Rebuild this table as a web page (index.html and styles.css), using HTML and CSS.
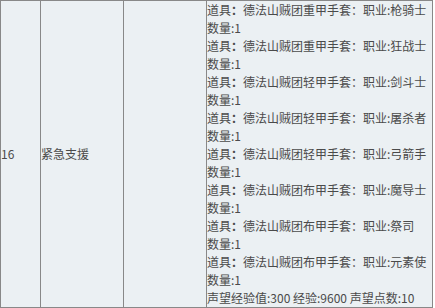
FILE: index.html
```html
<!DOCTYPE html>
<html>
<head>
<meta charset="utf-8">
<link rel="stylesheet" href="styles.css">
</head>
<body>
<table class="quest">
  <colgroup>
    <col class="c-id"><col class="c-name"><col class="c-blank"><col class="c-reward">
  </colgroup>
  <tr>
    <td class="cell">16</td>
    <td class="cell">紧急支援</td>
    <td class="cell"></td>
    <td class="cell reward">
      <div class="line">道具<b class="colon">：</b>德法山贼团重甲手套：职业:枪骑士</div>
      <div class="line">数量:1</div>
      <div class="line">道具<b class="colon">：</b>德法山贼团重甲手套：职业:狂战士</div>
      <div class="line">数量:1</div>
      <div class="line">道具<b class="colon">：</b>德法山贼团轻甲手套：职业:剑斗士</div>
      <div class="line">数量:1</div>
      <div class="line">道具<b class="colon">：</b>德法山贼团轻甲手套：职业:屠杀者</div>
      <div class="line">数量:1</div>
      <div class="line">道具<b class="colon">：</b>德法山贼团轻甲手套：职业:弓箭手</div>
      <div class="line">数量:1</div>
      <div class="line">道具<b class="colon">：</b>德法山贼团布甲手套：职业:魔导士</div>
      <div class="line">数量:1</div>
      <div class="line">道具<b class="colon">：</b>德法山贼团布甲手套：职业:祭司</div>
      <div class="line">数量:1</div>
      <div class="line">道具<b class="colon">：</b>德法山贼团布甲手套：职业:元素使</div>
      <div class="line">数量:1</div>
      <div class="line">声望经验值:300 经验:9600 声望点数:10</div>
    </td>
  </tr>
</table>
</body>
</html>
```
FILE: styles.css
```css
html, body {
  margin: 0;
  padding: 0;
  background: #ffffff;
}
.quest {
  border-collapse: collapse;
  table-layout: fixed;
  width: 433px;
  background: #ebf0f3;
  font-family: "Noto Sans CJK SC", sans-serif;
  font-size: 12px;
  line-height: 18px;
  color: #4a4a4a;
  border: 1px solid #888888;
}
.c-id { width: 40px; }
.c-name { width: 83px; }
.c-blank { width: 83px; }
.c-reward { width: 226px; }
.cell {
  border: 1px solid #888888;
  padding: 0;
  vertical-align: middle;
  white-space: nowrap;
  overflow: hidden;
}
.line {
  height: 18px;
}
.colon {
  font-weight: bold;
}
```
